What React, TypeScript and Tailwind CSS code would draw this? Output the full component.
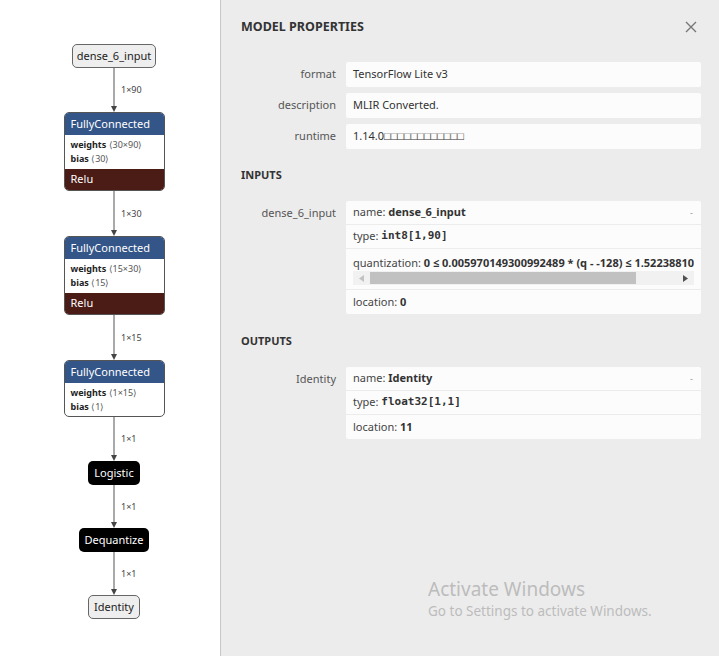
import React from 'react';

const FONT = { fontFamily: '"Noto Sans", "Open Sans", sans-serif' };
const MONO = { fontFamily: '"DejaVu Sans Mono", "Liberation Mono", monospace' };

const Edge: React.FC<{ h: number; label: string }> = ({ h, label }) => (
  <div className="relative w-full" style={{ height: h }}>
    <svg className="absolute left-1/2 top-0 -translate-x-1/2" width="10" height={h} viewBox={`0 0 10 ${h}`}>
      <line x1="5" y1="0" x2="5" y2={h - 5} stroke="#555" strokeWidth="1" />
      <path d={`M2 ${h - 6} L8 ${h - 6} L5 ${h} Z`} fill="#444" />
    </svg>
    <span className="absolute left-[calc(50%+7px)] top-1/2 -translate-y-1/2 text-[9px] text-[#444]">{label}</span>
  </div>
);

const Fc: React.FC<{ w: string; b: string; relu?: boolean }> = ({ w, b, relu }) => (
  <div className="w-[101px] rounded-[5px] overflow-hidden border border-[#555] bg-white">
    <div className="h-[22px] bg-[#335588] text-white text-[11px] pl-[6px] flex items-center">FullyConnected</div>
    <div className={`${relu ? 'h-[34px]' : 'h-[33px]'} flex flex-col justify-center pl-[6px] text-[9px] leading-[14px] text-[#222]`}>
      <div><span className="font-bold">weights</span> <span className="text-[#555]">⟨{w}⟩</span></div>
      <div><span className="font-bold">bias</span> <span className="text-[#555]">⟨{b}⟩</span></div>
    </div>
    {relu && <div className="h-[21px] bg-[#4b1b16] text-white text-[11px] pl-[6px] flex items-center">Relu</div>}
  </div>
);

const Pill: React.FC<{ text: string; w: number; dark?: boolean }> = ({ text, w, dark }) => (
  <div
    className={`h-[24px] rounded-[5px] flex items-center justify-center text-[11px] ${dark ? 'bg-black text-white' : 'bg-[#eee] border border-[#666] text-[#222]'}`}
    style={{ width: w }}
  >
    {text}
  </div>
);

const PropRow: React.FC<{ label: string; value: string }> = ({ label, value }) => (
  <div className="flex items-center mb-[6px]">
    <div className="w-[95px] text-right text-[11px] text-[#555]">{label}</div>
    <div className="ml-[10px] w-[355px] h-[25px] bg-[#fcfcfc] rounded-[2px] flex items-center pl-[7px] text-[11px] text-[#333]">{value}</div>
  </div>
);

const Cell: React.FC<{ children: React.ReactNode; last?: boolean; dash?: boolean }> = ({ children, last, dash }) => (
  <div className={`relative h-[24px] flex items-center px-[7px] text-[11px] text-[#444] ${last ? '' : 'border-b border-[#ececec]'}`}>
    {children}
    {dash && <span className="absolute right-[8px] top-[5px] text-[9px] text-[#999]">-</span>}
  </div>
);

export default function App() {
  return (
    <div className="w-[719px] h-[656px] flex overflow-hidden relative" style={FONT}>
      {/* graph */}
      <div className="w-[221px] h-full bg-white border-r border-[#c8c8c8] shrink-0">
        <div className="ml-[8px] w-[212px] flex flex-col items-center pt-[44px]">
          <div className="h-[24px] w-[84px] rounded-[5px] bg-[#eee] border border-[#666] flex items-center justify-center text-[11px] text-[#222]">dense_6_input</div>
          <Edge h={44} label="1×90" />
          <Fc w="30×90" b="30" relu />
          <Edge h={45} label="1×30" />
          <Fc w="15×30" b="15" relu />
          <Edge h={45} label="1×15" />
          <Fc w="1×15" b="1" />
          <Edge h={44} label="1×1" />
          <Pill text="Logistic" w={52} dark />
          <Edge h={43} label="1×1" />
          <Pill text="Dequantize" w={70} dark />
          <Edge h={43} label="1×1" />
          <Pill text="Identity" w={52} />
        </div>
      </div>

      {/* properties */}
      <div className="flex-1 h-full bg-[#ececec] pl-[20px] pt-[17px]">
        <div className="flex items-center justify-between h-[20px] pr-[22px]">
          <h1 className="text-[12.5px] font-bold text-[#333]">MODEL PROPERTIES</h1>
          <svg width="12" height="12" viewBox="0 0 12 12">
            <path d="M1 1 L11 11 M11 1 L1 11" stroke="#777" strokeWidth="1.4" />
          </svg>
        </div>

        <div className="mt-[25px]">
          <PropRow label="format" value="TensorFlow Lite v3" />
          <PropRow label="description" value="MLIR Converted." />
          <PropRow label="runtime" value="1.14.0□□□□□□□□□□□□" />
        </div>

        <h2 className="mt-[16px] h-[20px] flex items-center text-[11px] font-bold text-[#333]">INPUTS</h2>

        <div className="flex items-start mt-[16px]">
          <div className="w-[95px] text-right text-[11px] text-[#555] pt-[4px]">dense_6_input</div>
          <div className="ml-[10px] w-[355px] bg-[#fcfcfc] rounded-[2px]">
            <Cell dash>name:&nbsp;<span className="font-bold text-[#333]">dense_6_input</span></Cell>
            <Cell>type:&nbsp;<span className="font-bold text-[#333]" style={MONO}>int8[1,90]</span></Cell>
            <div className="h-[41px] border-b border-[#ececec] px-[7px] pt-[6px] overflow-hidden">
              <div className="whitespace-nowrap overflow-hidden text-[11px] text-[#444] leading-[15px]">
                quantization: <span className="font-bold text-[#333]">0 ≤ 0.005970149300992489 * (q - -128) ≤ 1.52238810</span>
              </div>
              <div className="mt-[1px] h-[14px] bg-[#f1f1f1] flex items-center">
                <span className="w-[17px] flex justify-center">
                  <svg width="5" height="7" viewBox="0 0 5 7"><path d="M5 0 L0 3.5 L5 7 Z" fill="#c2c2c2" /></svg>
                </span>
                <div className="h-[12px] w-[266px] bg-[#c1c1c1]" />
                <div className="flex-1" />
                <span className="w-[17px] flex justify-center">
                  <svg width="5" height="7" viewBox="0 0 5 7"><path d="M0 0 L5 3.5 L0 7 Z" fill="#505050" /></svg>
                </span>
              </div>
            </div>
            <Cell last>location:&nbsp;<span className="font-bold text-[#333]">0</span></Cell>
          </div>
        </div>

        <h2 className="mt-[17px] h-[20px] flex items-center text-[11px] font-bold text-[#333]">OUTPUTS</h2>

        <div className="flex items-start mt-[16px]">
          <div className="w-[95px] text-right text-[11px] text-[#555] pt-[4px]">Identity</div>
          <div className="ml-[10px] w-[355px] bg-[#fcfcfc] rounded-[2px]">
            <Cell dash>name:&nbsp;<span className="font-bold text-[#333]">Identity</span></Cell>
            <Cell>type:&nbsp;<span className="font-bold text-[#333]" style={MONO}>float32[1,1]</span></Cell>
            <Cell last>location:&nbsp;<span className="font-bold text-[#333]">11</span></Cell>
          </div>
        </div>
      </div>

      {/* watermark overlay */}
      <div className="absolute left-[428px] top-[577px] text-[#bcbcbc] pointer-events-none">
        <div className="text-[19px] leading-[24px]">Activate Windows</div>
        <div className="text-[13.5px] leading-[20px]">Go to Settings to activate Windows.</div>
      </div>
    </div>
  );
}
